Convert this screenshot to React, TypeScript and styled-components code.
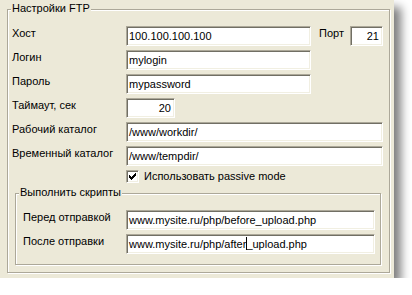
import React from "react";
import styled, { createGlobalStyle } from "styled-components";

const GlobalStyle = createGlobalStyle`
  body {
    margin: 0;
    background: #ffffff;
    font-family: "Liberation Sans", Arial, sans-serif;
    font-size: 11px;
    color: #000;
  }
`;

const Dialog = styled.div`
  width: 394px;
  height: 278px;
  box-sizing: border-box;
  padding: 9px 4px 5px 7px;
  background: #ece9d8;
  box-shadow: 7px 7px 9px rgba(0, 0, 0, 0.5);
`;

const GroupBox = styled.div<{ $pad: string; $margin?: string }>`
  position: relative;
  border: 1px solid #aca899;
  box-shadow: 1px 1px 0 #ffffff, inset 1px 1px 0 #ffffff;
  padding: ${(p) => p.$pad};
  margin: ${(p) => p.$margin || "0"};
`;

const GroupTitle = styled.div`
  position: absolute;
  top: -8px;
  left: 3px;
  padding: 0 1px;
  line-height: 13px;
  background: #ece9d8;
  white-space: nowrap;
`;

const Row = styled.div<{ $top?: number }>`
  display: flex;
  align-items: flex-start;
  height: 20px;
  margin-top: ${(p) => p.$top ?? 4}px;
`;

const Label = styled.div<{ $w: number }>`
  width: ${(p) => p.$w}px;
  flex: none;
  line-height: 13px;
  padding-top: 1px;
  white-space: nowrap;
`;

const Field = styled.div<{ $w: number; $right?: boolean }>`
  width: ${(p) => p.$w}px;
  height: 20px;
  flex: none;
  box-sizing: border-box;
  background: #ffffff;
  border: 1px solid;
  border-color: #aca899 #ffffff #ffffff #aca899;
  box-shadow: inset 1px 1px 0 #716f64, inset -1px -1px 0 #f1efe2;
  padding: 0 3px 0 2px;
  line-height: 18px;
  white-space: nowrap;
  overflow: hidden;
  text-align: ${(p) => (p.$right ? "right" : "left")};
`;

const Caret = styled.span`
  display: inline-block;
  width: 1px;
  height: 13px;
  margin-right: -1px;
  background: #000;
  vertical-align: -2px;
`;

const PortLabel = styled.div`
  margin-left: 8px;
  width: 31px;
  line-height: 13px;
  padding-top: 1px;
`;

const CheckRow = styled.div`
  display: flex;
  align-items: center;
  margin: 4px 0 0 114px;
  height: 13px;
`;

const CheckBox = styled.div`
  width: 13px;
  height: 13px;
  box-sizing: border-box;
  background: #ffffff;
  border: 1px solid;
  border-color: #aca899 #ffffff #ffffff #aca899;
  box-shadow: inset 1px 1px 0 #716f64, inset -1px -1px 0 #f1efe2;
  display: flex;
  align-items: center;
  justify-content: center;
`;

const CheckText = styled.span`
  margin-left: 5px;
  line-height: 13px;
`;

const checkCols = [2, 3, 4, 3, 2, 1, 0];

const CheckMark = () => (
  <svg width="7" height="7" viewBox="0 0 7 7" shapeRendering="crispEdges">
    {checkCols.map((y, x) => (
      <rect key={x} x={x} y={y} width="1" height="3" fill="#000" />
    ))}
  </svg>
);

export default function App() {
  return (
    <>
      <GlobalStyle />
      <Dialog>
        <GroupBox $pad="0 0 7px 4px">
          <GroupTitle>Настройки FTP</GroupTitle>
          <Row $top={16}>
            <Label $w={114}>Хост</Label>
            <Field $w={185}>100.100.100.100</Field>
            <PortLabel>Порт</PortLabel>
            <Field $w={33} $right>
              21
            </Field>
          </Row>
          <Row>
            <Label $w={114}>Логин</Label>
            <Field $w={185}>mylogin</Field>
          </Row>
          <Row>
            <Label $w={114}>Пароль</Label>
            <Field $w={185}>mypassword</Field>
          </Row>
          <Row>
            <Label $w={114}>Таймаут, сек</Label>
            <Field $w={49} $right>
              20
            </Field>
          </Row>
          <Row>
            <Label $w={114}>Рабочий каталог</Label>
            <Field $w={257}>/www/workdir/</Field>
          </Row>
          <Row>
            <Label $w={114}>Временный каталог</Label>
            <Field $w={257}>/www/tempdir/</Field>
          </Row>
          <CheckRow>
            <CheckBox>
              <CheckMark />
            </CheckBox>
            <CheckText>Использовать passive mode</CheckText>
          </CheckRow>

          <GroupBox $pad="0 0 10px 7px" $margin="10px 8px 0 3px">
            <GroupTitle>Выполнить скрипты</GroupTitle>
            <Row $top={16}>
              <Label $w={103}>Перед отправкой</Label>
              <Field $w={249}>www.mysite.ru/php/before_upload.php</Field>
            </Row>
            <Row>
              <Label $w={103}>После отправки</Label>
              <Field $w={249}>
                www.mysite.ru/php/after
                <Caret />
                _upload.php
              </Field>
            </Row>
          </GroupBox>
        </GroupBox>
      </Dialog>
    </>
  );
}
